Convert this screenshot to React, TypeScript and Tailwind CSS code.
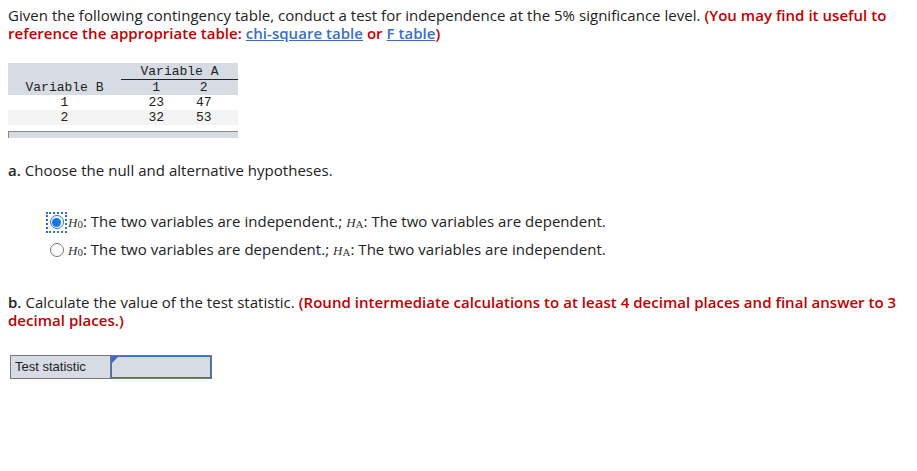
import React from "react";

const SANS = "font-['Open_Sans','Lato',sans-serif]";
const MONO = "font-['Liberation_Mono','Courier_New',monospace]";

function H({ sub }: { sub: string }) {
  return (
    <span className="font-['Liberation_Serif',serif] text-[13px] italic tracking-normal text-[#333]">
      H<sub className="relative top-[1px] align-baseline text-[11px] leading-none not-italic">{sub}</sub>
    </span>
  );
}

function Radio({ checked }: { checked?: boolean }) {
  if (checked) {
    return (
      <span className="flex h-[17px] w-[17px] items-center justify-center outline-2 outline-dotted outline-[#2a6fd6]">
        <span className="flex h-[14px] w-[14px] items-center justify-center rounded-full border border-[#1a73e8] bg-white">
          <span className="h-[9px] w-[9px] rounded-full bg-[#1a73e8]" />
        </span>
      </span>
    );
  }
  return (
    <span className="flex h-[17px] w-[17px] items-center justify-center">
      <span className="h-[14px] w-[14px] rounded-full border border-[#767676] bg-white" />
    </span>
  );
}

export default function App() {
  return (
    <div className={`${SANS} min-h-[471px] w-[917px] bg-white px-2 pt-[6px] text-[15px] leading-[18px] tracking-[0.03px] text-[#222]`}>
      <p>
        Given the following contingency table, conduct a test for independence at the 5% significance level.{" "}
        <b className="font-semibold text-[#c00000]">
          (You may find it useful to reference the appropriate table:{" "}
          <a className="text-[#3a6fc4] underline">chi-square table</a> or{" "}
          <a className="text-[#3a6fc4] underline">F table</a>)
        </b>
      </p>

      <div className={`${MONO} mt-[21px] w-[230px] text-[13px] leading-[15px] tracking-normal text-[#222]`}>
        <div className="grid grid-cols-[113px_1fr_1fr] bg-[#d6dbe4]">
          <div />
          <div className="col-span-2 border-b border-[#222] pt-[1px] text-center">Variable A</div>
          <div className="text-center">Variable B</div>
          <div className="pl-[12px] text-center">1</div>
          <div className="pr-[10px] text-center">2</div>
        </div>
        <div className="grid grid-cols-[113px_1fr_1fr] bg-white">
          <div className="text-center">1</div>
          <div className="pl-[12px] text-center">23</div>
          <div className="pr-[10px] text-center">47</div>
        </div>
        <div className="grid grid-cols-[113px_1fr_1fr] bg-[#f4f4f4]">
          <div className="text-center">2</div>
          <div className="pl-[12px] text-center">32</div>
          <div className="pr-[10px] text-center">53</div>
        </div>
        <div className="mt-[6px] h-[7px] border-l border-t border-[#8a8a8a] bg-[#d6dbe4]" />
      </div>

      <p className="mt-[23px]">
        <b className="font-semibold">a.</b> Choose the null and alternative hypotheses.
      </p>

      <div className="mt-[33px] flex flex-col gap-[8px] pl-[40px]">
        <div className="flex items-center gap-[3px]">
          <Radio checked />
          <span>
            <H sub="0" />: The two variables are independent.; <H sub="A" />: The two variables are dependent.
          </span>
        </div>
        <div className="flex items-center gap-[3px]">
          <Radio />
          <span>
            <H sub="0" />: The two variables are dependent.; <H sub="A" />: The two variables are independent.
          </span>
        </div>
      </div>

      <p className="mt-[33px]">
        <b className="font-semibold">b.</b> Calculate the value of the test statistic.{" "}
        <b className="font-semibold text-[#c00000]">
          (Round intermediate calculations to at least 4 decimal places and final answer to 3 decimal places.)
        </b>
      </p>

      <div className="ml-[2px] mt-[26px] flex h-[24px] w-[202px] border border-[#777] bg-[#d6dbe4] tracking-normal">
        <div className="flex w-[100px] items-center border-r border-[#777] pl-[4px] font-['Liberation_Sans',Arial,sans-serif] text-[13px] text-[#222]">
          Test statistic
        </div>
        <div className="relative flex-1 border border-[#3a6fc4]">
          <span className="absolute left-0 top-0 h-0 w-0 border-l-[6px] border-t-[6px] border-l-transparent border-t-[#3a6fc4] [transform:scaleX(-1)]" />
        </div>
      </div>
    </div>
  );
}
